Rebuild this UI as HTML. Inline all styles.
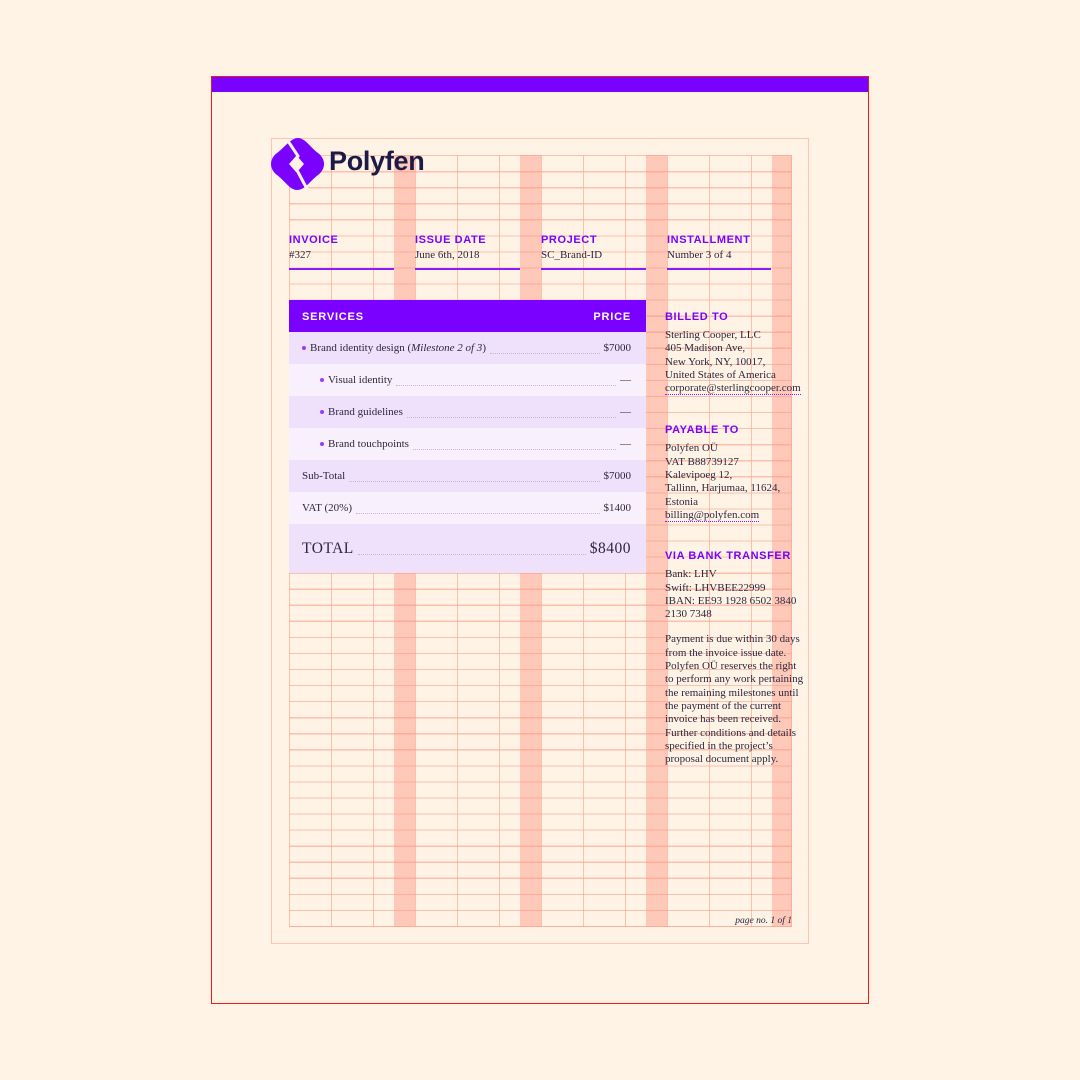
<!DOCTYPE html>
<html><head><meta charset="utf-8"><style>
*{margin:0;padding:0;box-sizing:border-box}
body{width:1080px;height:1080px;background:#fef3e4;position:relative;overflow:hidden;font-family:"Liberation Serif",serif;color:#2d2740}
.abs{position:absolute}
#frame{left:211px;top:76px;width:658px;height:928px;border:1.5px solid #f01818}
#bar{left:212px;top:77px;width:656px;height:15px;background:#7a00ff}
#inner{left:271px;top:138px;width:538px;height:806px;border:1px solid #ffc4b6}
#grid{left:289px;top:155px;width:503px;height:772px;
background:
repeating-linear-gradient(to right,transparent 0,transparent 105px,rgba(255,150,130,.45) 105px,rgba(255,150,130,.45) 126px),
repeating-linear-gradient(to right,rgba(255,170,150,.7) 0,rgba(255,170,150,.7) 1.2px,transparent 1.2px,transparent 42px),
repeating-linear-gradient(to bottom,rgba(255,170,150,.7) 0,rgba(255,170,150,.7) 1.2px,transparent 1.2px,transparent 16.06px);
border-right:1.2px solid rgba(255,170,150,.7);border-bottom:1.2px solid rgba(255,170,150,.7)}
.h{font-family:"Liberation Sans",sans-serif;font-weight:bold;color:#7a00ff;font-size:11px;letter-spacing:.6px}
.v{font-size:11px;line-height:13.3px}
.ul{border-bottom:2px solid #8a1cff}
#tbl{left:289px;top:300px;width:357px;height:273px;background:#f0e3fb}
.row{position:absolute;left:0;width:357px;height:32px;font-size:11px;display:flex;align-items:center;padding:0 15px 0 13px}
.row .dots{flex:1;border-bottom:1px dotted #c9b0e6;margin:0 4px;height:8px;align-self:center;margin-top:4px}
.b{display:inline-block;width:4px;height:4px;border-radius:50%;background:#9a3cff;margin-right:4px;vertical-align:middle}
.dot{border-bottom:1px dotted #8a1cff}
</style></head><body>
<div class="abs" id="frame"></div>
<div class="abs" id="bar"></div>
<div class="abs" id="inner"></div>
<div class="abs" id="grid"></div>

<svg class="abs" style="left:268px;top:134px" width="60" height="60" viewBox="0 0 60 60">
<path d="M30,4 C37,4 42,13 50,19 C58,25 58,35 50,41 C42,47 37,56 29,56 C22,56 17,47 9,41 C1,35 1,25 9,19 C17,13 23,4 30,4 Z" fill="#7a00ff"/>
<polyline points="20,7 30,22 23,30 30,38 39,55" fill="none" stroke="#fef3e4" stroke-width="3"/>
<polygon points="30,23 36,30 30,37 24,30" fill="#fef3e4"/>
</svg>
<div class="abs" style="left:329px;top:146px;font-family:'Liberation Sans',sans-serif;font-weight:bold;font-size:27px;color:#1e1a48;letter-spacing:-.3px">Polyfen</div>

<div class="abs" style="left:289px;top:234px;width:105px"><div class="h">INVOICE</div><div class="v" style="margin-top:3px">#327</div><div class="ul" style="margin-top:-15px;height:23px"></div></div>
<div class="abs" style="left:415px;top:234px;width:105px"><div class="h">ISSUE DATE</div><div class="v" style="margin-top:3px">June 6th, 2018</div><div class="ul" style="margin-top:-15px;height:23px"></div></div>
<div class="abs" style="left:541px;top:234px;width:105px"><div class="h">PROJECT</div><div class="v" style="margin-top:3px">SC_Brand-ID</div><div class="ul" style="margin-top:-15px;height:23px"></div></div>
<div class="abs" style="left:667px;top:234px;width:104px"><div class="h">INSTALLMENT</div><div class="v" style="margin-top:3px">Number 3 of 4</div><div class="ul" style="margin-top:-15px;height:23px"></div></div>

<div class="abs" id="tbl">
<div class="row" style="top:0;background:#7a00ff;color:#fff;font-family:'Liberation Sans',sans-serif;font-weight:bold;font-size:11px;letter-spacing:.8px;justify-content:space-between;padding-top:2px"><span>SERVICES</span><span>PRICE</span></div>
<div class="row" style="top:32px;background:#efe1fb"><span><span class="b"></span>Brand identity design (<i>Milestone 2 of 3</i>)</span><span class="dots"></span><span>$7000</span></div>
<div class="row" style="top:64px;background:#f8f0fc;padding-left:31px"><span><span class="b"></span>Visual identity</span><span class="dots"></span><span>—</span></div>
<div class="row" style="top:96px;background:#efe1fb;padding-left:31px"><span><span class="b"></span>Brand guidelines</span><span class="dots"></span><span>—</span></div>
<div class="row" style="top:128px;background:#f8f0fc;padding-left:31px"><span><span class="b"></span>Brand touchpoints</span><span class="dots"></span><span>—</span></div>
<div class="row" style="top:160px;background:#efe1fb"><span>Sub-Total</span><span class="dots"></span><span>$7000</span></div>
<div class="row" style="top:192px;background:#f8f0fc"><span>VAT (20%)</span><span class="dots"></span><span>$1400</span></div>
<div class="row" style="top:224px;height:49px;background:#efe1fb;font-size:15.5px;letter-spacing:.5px"><span>TOTAL</span><span class="dots"></span><span>$8400</span></div>
</div>

<div class="abs" style="left:665px;top:311px;width:150px">
<div class="h">BILLED TO</div>
<div class="v" style="margin-top:6px">Sterling Cooper, LLC<br>405 Madison Ave,<br>New York, NY, 10017,<br>United States of America<br><span class="dot">corporate@sterlingcooper.com</span></div>
<div class="h" style="margin-top:29px">PAYABLE TO</div>
<div class="v" style="margin-top:6px">Polyfen OÜ<br>VAT B88739127<br>Kalevipoeg 12,<br>Tallinn, Harjumaa, 11624,<br>Estonia<br><span class="dot">billing@polyfen.com</span></div>
<div class="h" style="margin-top:28px">VIA BANK TRANSFER</div>
<div class="v" style="margin-top:6px">Bank: LHV<br>Swift: LHVBEE22999<br>IBAN: EE93 1928 6502 3840<br>2130 7348</div>
<div class="v" style="margin-top:12px">Payment is due within 30 days<br>from the invoice issue date.<br>Polyfen OÜ reserves the right<br>to perform any work pertaining<br>the remaining milestones until<br>the payment of the current<br>invoice has been received.<br>Further conditions and details<br>specified in the project’s<br>proposal document apply.</div>
</div>

<div class="abs" style="left:700px;top:916px;width:92px;text-align:right;font-size:9.5px;font-style:italic">page no. 1 of 1</div>
</body></html>
